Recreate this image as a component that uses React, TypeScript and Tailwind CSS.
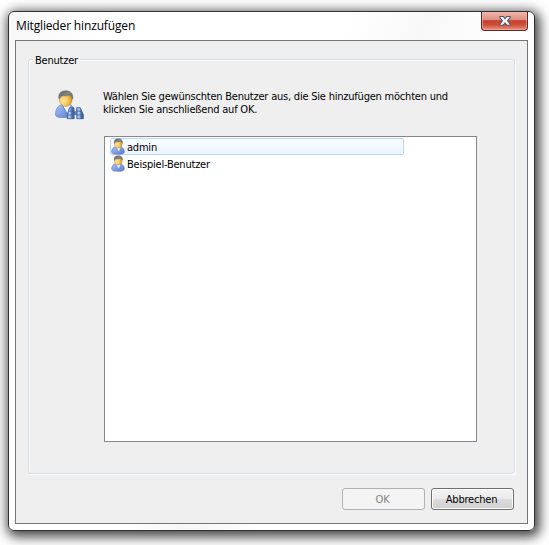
import React from "react";

function PersonDefs() {
  return (
    <svg className="absolute h-0 w-0" aria-hidden="true">
      <defs>
        <radialGradient id="face" cx="0.3" cy="0.55" r="0.75">
          <stop offset="0" stopColor="#ffe9a0" />
          <stop offset="0.5" stopColor="#fac75a" />
          <stop offset="1" stopColor="#c98a26" />
        </radialGradient>
        <linearGradient id="hair" x1="0" y1="0" x2="1" y2="1">
          <stop offset="0" stopColor="#5f5f5f" />
          <stop offset="0.5" stopColor="#858585" />
          <stop offset="1" stopColor="#5b5b5b" />
        </linearGradient>
        <linearGradient id="coat" x1="0" y1="0" x2="1" y2="1">
          <stop offset="0" stopColor="#a9c4f5" />
          <stop offset="0.5" stopColor="#7f9fe2" />
          <stop offset="1" stopColor="#5577c4" />
        </linearGradient>
        <linearGradient id="lens" x1="0" y1="0" x2="1" y2="0">
          <stop offset="0" stopColor="#6d8fc4" />
          <stop offset="0.35" stopColor="#c3d8f3" />
          <stop offset="0.6" stopColor="#5d80b8" />
          <stop offset="1" stopColor="#304f8c" />
        </linearGradient>
      </defs>
    </svg>
  );
}

function SearchUserIcon() {
  return (
    <svg width="30" height="32" viewBox="0 0 30 32" className="shrink-0">
      <path d="M1.5 25.5C1.5 19.5 4.5 16.4 8 15.5H16C19 17 20 20 20 24L17 28.5H7C3.5 28.5 1.5 27.5 1.5 25.5Z" fill="url(#coat)" stroke="#6483c8" strokeWidth="0.7" />
      <path d="M8.8 16L13.5 24.5L16.5 16Z" fill="#f7f9ff" />
      <path d="M8.3 16.3L13.3 25.5" stroke="#587ac8" strokeWidth="0.7" />
      <ellipse cx="11.8" cy="11" rx="6.3" ry="6.5" fill="url(#face)" stroke="#b58431" strokeWidth="0.5" />
      <path d="M5 10C3.7 5 6.8 1.7 11.8 1.7C16.8 1.7 19.8 5 18.6 10.2L17.6 8C16.6 6.8 15.8 6.2 15 6C12.5 7.1 9.5 6.8 7.4 7L6 9Z" fill="url(#hair)" stroke="#555" strokeWidth="0.4" />
      <path d="M15 18.6H20V22.2H22.6V18.6H26.4L29.4 25.4V30H22.8V26H20V30H13V25.2Z" fill="#5a7db5" />
      <path d="M15.8 18.8H20L20.2 29.7H13.3V25.4Z" fill="url(#lens)" stroke="#3e609b" strokeWidth="0.7" />
      <path d="M22.7 18.8H26.2L29.2 25.4V29.7H22.8Z" fill="url(#lens)" stroke="#3e609b" strokeWidth="0.7" />
      <path d="M15 22.2H20M13.6 26H20M22.8 22.2H27.4M22.8 26H28.9" stroke="#3e609b" strokeWidth="0.8" />
    </svg>
  );
}

function UserIcon() {
  return (
    <svg width="14" height="17" viewBox="0 0 14 17" className="-mt-px shrink-0">
      <path d="M0.7 13.8C0.7 10.8 2.5 9.1 4.7 8.7H9.7C12 9.5 13.3 11.3 13.3 14C13.3 15.5 11 16.3 7 16.3C2.8 16.3 0.7 15.5 0.7 13.8Z" fill="url(#coat)" stroke="#6580c0" strokeWidth="0.7" />
      <path d="M5.5 9L7.8 13.5L9.6 9Z" fill="#f7f9ff" />
      <ellipse cx="7.3" cy="5.9" rx="3.8" ry="4.1" fill="url(#face)" stroke="#ba8738" strokeWidth="0.4" />
      <path d="M3.1 5.4C2.4 2.5 4.3 0.6 7.4 0.6C10.5 0.6 12.4 2.6 11.5 5.8L9.8 3.7C8 4.3 5.8 4 4.5 4.2L3.7 6Z" fill="url(#hair)" />
    </svg>
  );
}

function CloseButton() {
  return (
    <button className="mr-[6px] flex h-[19px] w-[47px] items-center justify-center rounded-b-[4px] border border-t-0 border-[#5a2524] bg-[linear-gradient(180deg,#f0b5ab_0%,#dc9084_44%,#c5402b_48%,#cf4c36_70%,#e99480_100%)] shadow-[inset_0_0_0_1px_#f2b9ae99]">
      <svg width="14" height="12" viewBox="0 0 14 12">
        <path d="M2 1.5H5.2L7 3.7L8.8 1.5H12V2.8L9.6 5.8L12 8.9V10.2H8.8L7 8L5.2 10.2H2V8.9L4.4 5.8L2 2.8Z" fill="#f7f7f7" stroke="#535666" strokeWidth="1.1" />
      </svg>
    </button>
  );
}

export default function App() {
  return (
    <div className="h-[545px] w-[549px] overflow-hidden bg-white pt-[11px] pl-[8px] font-['DejaVu_Sans_Condensed','DejaVu_Sans',sans-serif] text-[11px] tracking-[-0.215px] text-black">
      <PersonDefs />
      <div className="flex h-[520px] w-[527px] flex-col rounded-[6px] border border-[#303030] bg-[linear-gradient(115deg,#f7f7f7_0%,#fff_14%,#fff_45%,#f8f8f8_55%,#fff_66%)] shadow-[2px_3px_12px_3px_#000000b8]">
        <header className="flex h-[28px] shrink-0 items-start justify-between pl-[7px]">
          <h1 className="mt-[6px] font-['Open_Sans','Noto_Sans',sans-serif] text-[12px] leading-[16px] tracking-[-0.15px] whitespace-nowrap">Mitglieder hinzufügen</h1>
          <CloseButton />
        </header>
        <main className="mx-[6px] flex h-[484px] w-[513px] flex-col border border-[#73767a] bg-[#efefef] px-[12px] pt-[12px]">
          <fieldset className="h-[421px] w-[487px] shrink-0">
            <div className="relative mt-[6px] h-[415px] rounded-[3px] border border-[#d5dfe8] shadow-[inset_1px_1px_0_#fff,1px_1px_0_#fff]">
              <legend className="absolute top-[-7px] left-[4px] bg-[#efefef] px-[2px] leading-[15px]">Benutzer</legend>
              <div className="flex pt-[29px] pl-[25px]">
                <SearchUserIcon />
                <p className="ml-[19px] pt-px leading-[13px] whitespace-nowrap">
                  <span className="block">Wählen Sie gewünschten Benutzer aus, die Sie hinzufügen möchten und</span>
                  <span className="block">klicken Sie anschließend auf OK.</span>
                </p>
              </div>
              <ul className="mt-[15px] ml-[75px] h-[306px] w-[373px] border border-[#828790] bg-white pt-px pl-[5px]">
                <li className="flex h-[17px] w-[294px] items-center rounded-[2px] border border-[#b8d6fb] bg-linear-to-b from-[#fafcff] to-[#ebf4ff]">
                  <UserIcon />
                  <span className="ml-[2px] pt-[3px]">admin</span>
                </li>
                <li className="flex h-[17px] items-center pl-px">
                  <UserIcon />
                  <span className="ml-[2px] pt-[3px]">Beispiel-Benutzer</span>
                </li>
              </ul>
            </div>
          </fieldset>
          <footer className="mt-[14px] mr-px flex justify-end gap-[6px]">
            <button disabled className="h-[22px] w-[83px] rounded-[3px] border border-[#adb2b5] bg-[#f4f4f4] pt-[2px] pr-[2px] text-[#838383]">OK</button>
            <button className="h-[22px] w-[83px] rounded-[3px] border border-[#707070] bg-[linear-gradient(180deg,#f2f2f2_0%,#ebebeb_48%,#dddddd_50%,#cfcfcf_100%)] pt-[2px] pr-[2px] shadow-[inset_0_0_0_1px_#fcfcfc]">Abbrechen</button>
          </footer>
        </main>
      </div>
    </div>
  );
}
